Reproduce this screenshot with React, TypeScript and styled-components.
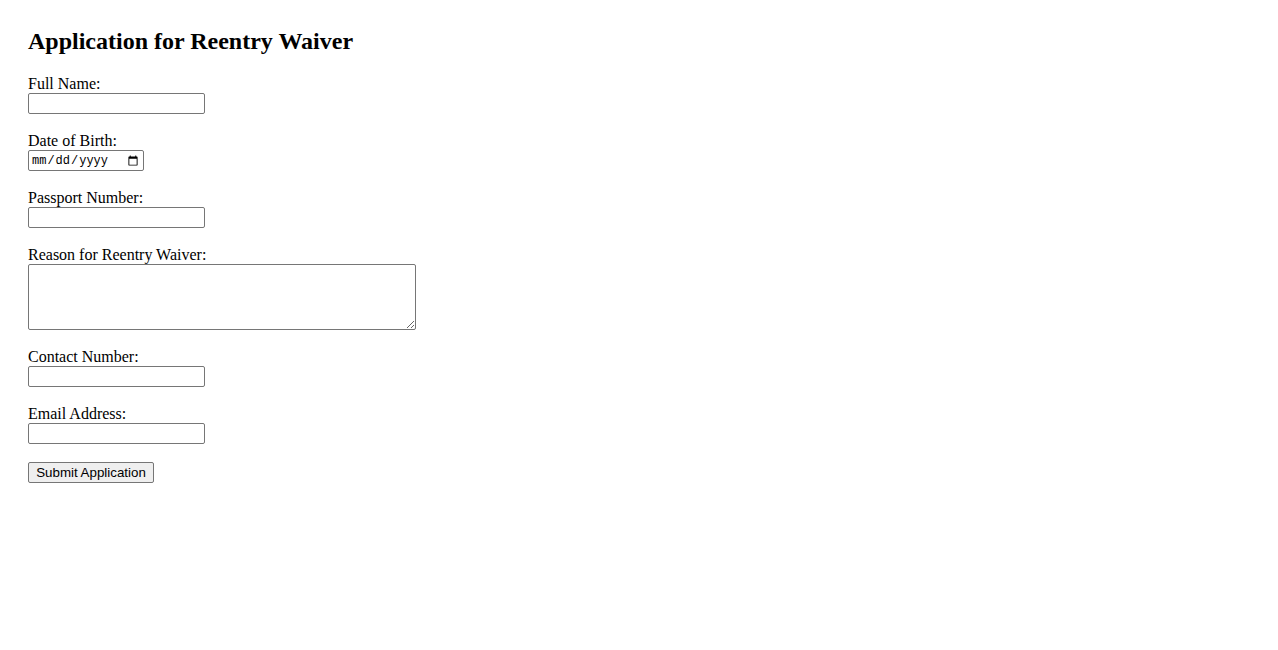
import React from 'react';
import styled, { createGlobalStyle } from 'styled-components';

const GlobalStyle = createGlobalStyle`
  html, body {
    margin: 0;
    padding: 0;
    background: #ffffff;
  }
  body {
    font-family: "Liberation Serif", "Times New Roman", serif;
    font-size: 16px;
    color: #000000;
  }
`;

const Page = styled.div`
  padding: 28px;
`;

const Title = styled.h2`
  margin: 0 0 20px;
  font-size: 24px;
  line-height: 27px;
  font-weight: bold;
`;

const Form = styled.form`
  display: flex;
  flex-direction: column;
  align-items: flex-start;
  gap: 18px;
`;

const Field = styled.div`
  display: flex;
  flex-direction: column;
  align-items: flex-start;
`;

const Label = styled.label`
  display: block;
  line-height: 18px;
  height: 18px;
`;

const TextInput = styled.input<{ $width?: number }>`
  box-sizing: border-box;
  display: block;
  width: ${props => props.$width || 177}px;
  height: 21px;
  margin: 0;
  padding: 1px 2px;
  border: 1px solid #767676;
  border-radius: 2px;
  background: #ffffff;
  font-family: "Liberation Sans", Arial, sans-serif;
  font-size: 13.33px;
`;

const DateInput = styled(TextInput)`
  font-family: "Liberation Mono", "Courier New", monospace;
  font-size: 12px;
  color: #000000;
`;

const TextArea = styled.textarea`
  box-sizing: border-box;
  display: block;
  width: 388px;
  height: 66px;
  margin: 0;
  padding: 2px;
  border: 1px solid #767676;
  border-radius: 2px;
  font-family: "Liberation Mono", monospace;
  font-size: 13.33px;
`;

const SubmitButton = styled.button`
  box-sizing: border-box;
  height: 21px;
  width: 126px;
  margin: 0;
  padding: 1px 6px;
  border: 1px solid #767676;
  border-radius: 2px;
  background: #efefef;
  color: #000000;
  font-family: "Liberation Sans", Arial, sans-serif;
  font-size: 13.33px;
  line-height: 17px;
`;

export default function App() {
  return (
    <Page>
      <GlobalStyle />
      <Title>Application for Reentry Waiver</Title>
      <Form onSubmit={e => e.preventDefault()}>
        <Field>
          <Label htmlFor="fullName">Full Name:</Label>
          <TextInput id="fullName" type="text" />
        </Field>
        <Field>
          <Label htmlFor="dob">Date of Birth:</Label>
          <DateInput id="dob" type="date" $width={116} />
        </Field>
        <Field>
          <Label htmlFor="passport">Passport Number:</Label>
          <TextInput id="passport" type="text" />
        </Field>
        <Field>
          <Label htmlFor="reason">Reason for Reentry Waiver:</Label>
          <TextArea id="reason" />
        </Field>
        <Field>
          <Label htmlFor="contact">Contact Number:</Label>
          <TextInput id="contact" type="tel" />
        </Field>
        <Field>
          <Label htmlFor="email">Email Address:</Label>
          <TextInput id="email" type="email" />
        </Field>
        <SubmitButton type="submit">Submit Application</SubmitButton>
      </Form>
    </Page>
  );
}
